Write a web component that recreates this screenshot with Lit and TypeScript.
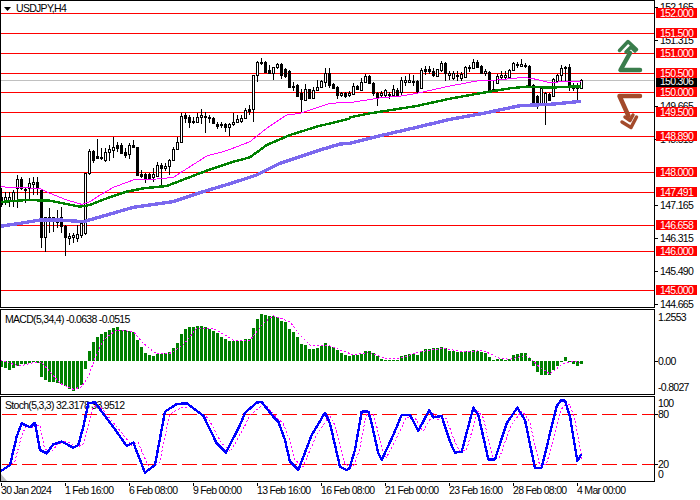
import { LitElement, html, svg, css } from "lit";
import { customElement } from "lit/decorators.js";

type P = number[];
// candle rows in 3x reference pixels: top, bottom, high, low, bullish
const C: number[][] = [
[590,612,565,620,0],[590,600,575,615,1],[590,600,575,620,1],[575,600,570,620,1],[537,565,525,625,1],[537,565,530,570,0],[566,570,560,610,0],[550,565,535,600,1],[545,552,530,585,1],[545,565,530,585,0],
[570,712,570,745,0],[650,710,650,755,1],[650,660,625,700,0],[652,660,650,695,0],[655,665,630,685,0],[652,678,620,700,0],[678,712,675,768,0],[707,713,700,735,1],[705,712,700,730,1],[702,715,675,725,1],
[670,705,665,715,1],[520,700,520,705,1],[453,520,448,525,1],[453,480,450,490,0],[468,475,418,478,0],[470,473,445,480,1],[457,480,445,485,1],[448,457,435,482,1],[442,450,410,475,1],[435,445,425,455,0],
[435,458,430,460,0],[455,465,445,475,0],[435,462,430,478,1],[435,442,420,445,0],[442,525,440,528,0],[522,527,510,535,0],[522,535,520,550,0],[523,535,520,538,0],[522,530,505,545,1],[495,527,487,530,1],
[495,505,488,560,0],[497,503,490,512,1],[480,497,478,525,1],[447,480,440,483,1],[427,448,410,450,1],[347,427,340,430,1],[345,353,340,370,0],[352,367,345,385,0],[362,365,350,372,0],[350,367,340,370,1],
[345,352,328,372,1],[348,352,335,398,0],[350,355,345,370,0],[355,370,350,372,0],[372,378,365,388,0],[372,375,365,385,1],[372,382,368,395,0],[372,382,368,408,1],[367,372,338,378,1],[358,367,345,370,1],
[355,362,345,368,1],[330,355,325,358,1],[327,332,315,345,0],[225,328,225,365,1],[187,225,183,245,1],[185,187,175,195,0],[185,215,183,218,0],[210,218,195,222,0],[202,218,200,240,1],[192,202,190,206,1],
[192,225,190,238,0],[208,228,205,235,0],[213,260,210,262,0],[258,260,245,272,0],[255,288,253,290,0],[280,298,268,335,0],[268,300,252,302,1],[268,295,266,298,0],[270,295,262,298,1],[260,270,240,272,1],
[243,262,240,264,1],[218,245,203,262,1],[218,255,205,265,0],[253,263,250,268,0],[262,285,258,297,0],[278,285,275,292,1],[280,288,276,295,0],[278,285,274,290,1],
[257,282,250,286,1],[258,268,255,270,0],[247,270,233,272,1],[227,247,222,250,1],[228,250,225,252,0],[248,280,245,288,0],[278,290,276,318,0],[280,285,272,295,1],[270,285,268,292,1],[282,285,275,298,1],
[268,285,255,290,1],[270,285,265,288,0],[240,275,230,285,1],[240,245,228,258,1],[240,245,222,250,1],[243,246,225,258,1],[243,272,241,278,0],[210,265,205,267,1],[207,213,197,225,0],[208,212,197,222,0],
[212,225,205,232,0],[208,228,206,232,1],[188,210,183,215,1],[188,220,186,242,0],[220,225,212,240,1],[218,235,212,240,1],[225,228,213,242,1],[222,235,215,242,1],[200,230,197,235,1],[200,205,195,215,0],
[185,205,178,208,1],[187,200,180,205,0],[197,218,195,222,0],[213,218,208,228,1],[215,272,212,275,0],[268,273,240,275,1],[228,248,222,250,1],[225,232,212,240,1],[225,232,212,238,1],[210,232,208,238,1],
[188,210,185,212,1],[192,195,186,205,1],[192,198,178,202,1],[195,198,190,205,1],[197,255,195,258,0],[255,315,253,318,0],[287,305,284,328,0],[265,315,262,318,1],[278,310,275,375,1],[282,300,280,303,0],
[238,288,235,290,1],[225,243,222,247,1],[205,225,195,245,1],[202,205,197,245,0],[200,255,192,272,0],[258,265,250,272,0],[257,265,250,300,0],[240,265,238,268,1],
];
const MACD: number[] = [262,265,270,265,258,252,252,248,244,248,290,300,305,307,308,312,318,328,332,328,315,268,213,185,172,162,155,150,145,142,150,150,152,157,180,200,218,225,228,222,222,220,215,205,190,162,148,142,140,138,138,142,148,152,160,170,178,182,182,182,183,178,178,145,117,103,105,108,108,112,122,125,147,157,172,192,195,207,206,205,198,190,197,200,210,218,225,228,225,225,222,212,212,218,228,236,240,240,240,240,228,225,222,222,225,214,207,207,204,203,200,205,212,213,215,215,213,212,210,212,215,218,232,240,238,238,240,236,226,222,220,220,234,258,275,285,285,284,270,258,245,232,244,252,257,253];

const LEFT = (a: P, oy: number) => a.map((v, i) => (i % 2 ? oy + v / 3 : v / 3));
const RIGHT = (a: P, oy: number) => a.map((v, i) => (i % 2 ? oy + v / 3 : 350 + v / 3));
const join = (l: P, r: P) => [...l, ...r].join(" ");

const MAG = join(LEFT([0,560,30,562,120,565,150,580,200,600,245,613,270,605,300,585,340,562,400,540,470,537,520,532,570,500,620,468,680,452,750,425,800,385,860,345,900,340,990,310,1048,307], 0), RIGHT([0,308,100,292,140,290,200,280,300,258,380,243,440,240,520,232,560,238,600,248,660,243,694,243], 0));
const GRN = join(LEFT([0,606,80,600,150,602,240,620,270,615,320,595,380,575,430,565,500,558,560,535,620,512,700,485,750,472,800,435,870,405,950,380,1048,356], 0), RIGHT([0,352,60,340,200,318,300,296,400,278,480,265,530,260,600,263,660,260,694,260], 0));
const BLU = join(LEFT([0,679,60,670,120,660,180,660,250,665,320,645,400,622,520,605,600,578,700,548,770,525,840,490,900,470,960,450,1020,432,1048,430], 0), RIGHT([0,430,100,405,200,382,300,358,400,340,510,317,600,313,694,304], 0));
const SIG = join(LEFT([0,240,30,250,60,258,100,248,125,248,150,275,180,310,220,328,245,320,265,290,285,235,310,180,350,150,400,155,430,190,470,222,510,220,550,195,590,145,640,145,700,180,750,180,790,130,820,107,870,125,900,165,930,195,990,198,1048,220], 280), RIGHT([0,225,60,218,110,237,150,235,210,215,280,205,340,215,400,212,450,235,480,238,530,225,570,262,600,282,640,250,680,243,694,250], 280));
const STL = [0,575,30,555,50,470,65,430,90,442,105,428,120,510,140,520,160,493,185,485,220,503,235,495,250,440,265,370,285,367,320,415,350,455,380,498,400,488,435,578,465,555,495,395,530,372,560,370,610,407,650,490,678,518,720,435,735,398,770,368,785,366,820,410,835,425,855,480,870,545,895,570,935,465,975,398,990,430,1020,560,1040,570,1048,565];
const STR = [0,560,15,510,35,395,55,395,65,430,85,520,95,540,130,465,155,405,180,405,205,452,238,390,250,412,275,408,300,485,315,518,335,515,370,383,385,405,415,538,435,538,470,430,502,383,525,420,555,565,575,563,620,378,632,362,645,362,660,410,682,543,694,523];
const STO = join(LEFT(STL, 280), RIGHT(STR, 280));
const lag = (a: P) => a.map((v, i) => (i % 2 ? 475 + (v - 475) * 0.9 : v + 14));
const STS = join(LEFT(lag(STL), 280), RIGHT(lag(STR).slice(0, -2), 280));

const LEVELS: [number, string][] = [[13,"152.000"],[33,"151.500"],[53,"151.000"],[73,"150.500"],[92,"150.000"],[112,"149.500"],[136,"148.890"],[172,"148.000"],[192,"147.491"],[225,"146.658"],[251,"146.000"],[290,"145.000"]];
const TICKS: [number, string][] = [[7,"152.165"],[40,"151.315"],[106,"149.665"],[139,"148.815"],[205,"147.165"],[238,"146.315"],[271,"145.490"],[304,"144.665"]];
const TIMES: [number, string][] = [[1,"30 Jan 2024"],[65,"1 Feb 16:00"],[129,"6 Feb 08:00"],[193,"9 Feb 00:00"],[257,"13 Feb 16:00"],[321,"16 Feb 08:00"],[385,"21 Feb 00:00"],[449,"23 Feb 16:00"],[513,"28 Feb 08:00"],[577,"4 Mar 00:00"]];

const px = (v: number) => Math.round(v / 3);
const axisText = (x: number, y: number, t: string) => svg`<text class="t" x=${x} y=${y}>${t}</text>`;
const tick = (y: number) => svg`<line class="k" x1="654" x2="658" y1=${y + 0.5} y2=${y + 0.5}></line>`;

@customElement("app-root")
export class AppRoot extends LitElement {
  static styles = css`
    :host { display: block; width: 700px; height: 500px; background: #fff; overflow: hidden; }
    .chart { display: flex; flex-direction: column; gap: 1px; width: 700px; }
    svg { display: block; width: 700px; flex: none; overflow: visible; }
    .main { height: 308px; }
    .sub { height: 86px; }
    .time { height: 18px; }
    .k { stroke: #000; stroke-width: 1; fill: none; shape-rendering: crispEdges; }
    .red { stroke: #f00; stroke-width: 1; shape-rendering: crispEdges; }
    .dash { stroke: #f00; stroke-width: 1; stroke-dasharray: 15 5; shape-rendering: crispEdges; }
    .grey { stroke: #c0c0c0; stroke-width: 1; shape-rendering: crispEdges; }
    .up { fill: #fff; stroke: #000; stroke-width: 1; shape-rendering: crispEdges; }
    .down { fill: #000; stroke: #000; stroke-width: 1; shape-rendering: crispEdges; }
    .line { fill: none; shape-rendering: crispEdges; stroke-linejoin: round; }
    .mag { stroke: #f0f; stroke-width: 1; }
    .grn { stroke: #008000; stroke-width: 2.4; }
    .blu { stroke: #7b68ee; stroke-width: 3.4; }
    .sto { stroke: #0000ff; stroke-width: 2.4; }
    .sig { stroke: #f0f; stroke-width: 1; stroke-dasharray: 2 2; }
    .bar { fill: #008000; shape-rendering: crispEdges; }
    .t { font: 10.5px "Liberation Sans", Arial, sans-serif; letter-spacing: -0.7px; fill: #000; }
    .w { font: 10.5px "Liberation Sans", Arial, sans-serif; letter-spacing: -0.7px; fill: #fff; text-anchor: middle; }
    .tag { fill: #f00; }
    .cur { fill: #000; }
    .tri { fill: #000; }
    .corner { fill: #c0c0c0; }
    .ga { fill: none; stroke: #3a7d4c; stroke-linecap: round; stroke-linejoin: round; }
    .ra { fill: none; stroke: #a34a2b; stroke-linecap: round; stroke-linejoin: round; }
    .s5 { stroke-width: 4.5; }
    .s3 { stroke-width: 3.5; }
  `;

  private candle(c: number[], i: number) {
    const x = 1 + 4 * i;
    const top = px(c[0]), bot = Math.max(px(c[1]), top + 1);
    return svg`
      <line class="k" x1=${x + 0.5} x2=${x + 0.5} y1=${px(c[2])} y2=${px(c[3])}></line>
      <rect class=${c[4] ? "up" : "down"} x=${x - 0.5} y=${top + 0.5} width="2" height=${bot - top}></rect>`;
  }

  private mainPane() {
    return svg`<svg class="main" viewBox="0 0 700 308">
      <line class="grey" x1="0" x2="654" y1="80.5" y2="80.5"></line>
      ${LEVELS.map(([y]) => svg`<line class="red" x1="0" x2="654" y1=${y + 0.5} y2=${y + 0.5}></line>`)}
      ${C.map((c, i) => this.candle(c, i))}
      <polyline class="line mag" points=${MAG}></polyline>
      <polyline class="line grn" points=${GRN}></polyline>
      <polyline class="line blu" points=${BLU}></polyline>
      <path class="tri" d="M4 7h7l-3.5 4z"></path>
      <text class="t" x="16" y="12">USDJPY,H4</text>
      <path class="ga s5" d="M630 53L620.5 70H640"></path>
      <path class="ga s3" d="M619.5 50.5L628 41.5L636.5 49.5"></path>
      <path class="ga s3" d="M626 52L631 47L635 51"></path>
      <path class="ra s5" d="M640 96H619.5L628.5 116"></path>
      <path class="ra s3" d="M622 122L631 127.5L636.5 117"></path>
      <path class="ra s3" d="M625 117L630 120.5L633 115"></path>
      <path class="k" d="M.5 308V.5H654.5V308M0 307.5H655"></path>
      ${TICKS.map(([y, t]) => svg`${tick(y)}${axisText(660, y + 3.5, t)}`)}
      <rect class="cur" x="656" y="77" width="41" height="10"></rect>
      <text class="w" x="676.5" y="85">150.306</text>
      ${LEVELS.map(([y, t]) => svg`
        <rect class="tag" x="656" y=${y - 5} width="41" height="10"></rect>
        <text class="w" x="676.5" y=${y + 3.5}>${t}</text>`)}
    </svg>`;
  }

  private macdPane() {
    const base = 243;
    return svg`<svg class="sub" viewBox="0 309 700 86">
      ${MACD.map((v, i) => svg`<rect class="bar" x=${4 * i} width="3"
        y=${280 + px(Math.min(v, base))} height=${Math.max(1, px(Math.abs(v - base)))}></rect>`)}
      <polyline class="line sig" points=${SIG}></polyline>
      <path class="k" d="M.5 395V309.5H654.5V395M0 394.5H655"></path>
      <text class="t" x="5" y="323">MACD(5,34,4) -0.0638 -0.0515</text>
      ${axisText(658, 321, "1.2553")}
      ${tick(361)}${axisText(658, 365, "0.00")}
      ${axisText(658, 391, "-0.8027")}
    </svg>`;
  }

  private stochPane() {
    return svg`<svg class="sub" viewBox="0 396 700 86">
      <path class="corner" d="M1 474L7 481H1z"></path>
      <line class="dash" x1="2" x2="654" y1="414.5" y2="414.5"></line>
      <line class="dash" x1="2" x2="654" y1="464.5" y2="464.5"></line>
      <text class="t" x="5" y="409">Stoch(5,3,3) 32.3178 33.9512</text>
      <polyline class="line sig" points=${STS}></polyline>
      <polyline class="line sto" points=${STO}></polyline>
      <path class="k" d="M.5 482V396.5H654.5V482M0 481.5H655"></path>
      ${axisText(658, 407, "100")}
      ${tick(414)}${axisText(658, 418, "80")}
      ${tick(464)}${axisText(658, 468, "20")}
      ${axisText(658, 478, "0")}
    </svg>`;
  }

  private timeAxis() {
    return svg`<svg class="time" viewBox="0 483 700 18">
      ${TIMES.map(([x, t]) => svg`
        <line class="k" x1=${x + 0.5} x2=${x + 0.5} y1="483" y2="486"></line>
        <text class="t" x=${x} y="494">${t}</text>`)}
    </svg>`;
  }

  render() {
    return html`<div class="chart">
      ${this.mainPane()}${this.macdPane()}${this.stochPane()}${this.timeAxis()}
    </div>`;
  }
}
